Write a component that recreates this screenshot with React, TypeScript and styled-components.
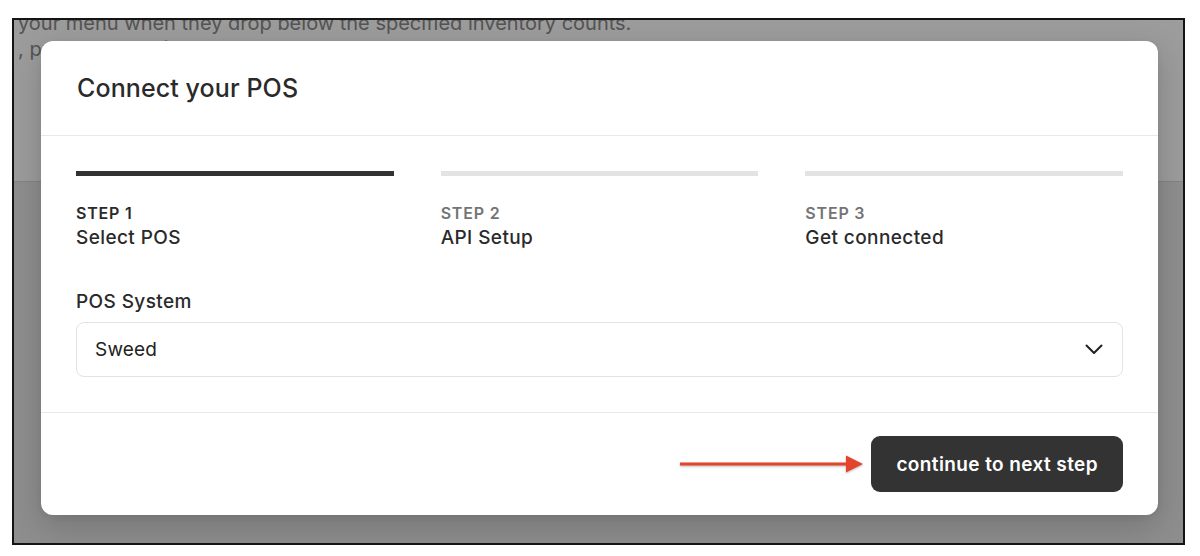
import React from "react";
import styled, { createGlobalStyle } from "styled-components";

const GlobalStyle = createGlobalStyle`
  html, body {
    margin: 0;
    padding: 0;
    background: #ffffff;
    font-family: Inter, "Noto Sans", "Liberation Sans", sans-serif;
    -webkit-font-smoothing: antialiased;
  }
  * { box-sizing: border-box; }
`;

const Stage = styled.div`
  width: 1200px;
  height: 556px;
  padding: 18px 15px 11px 12px;
`;

const Frame = styled.div`
  position: relative;
  width: 1173px;
  height: 527px;
  border: 2px solid #141414;
  overflow: hidden;
  display: flex;
  flex-direction: column;
`;

const PageTop = styled.div`
  height: 162px;
  background: #ffffff;
  border-bottom: 1px solid #d8d8d8;
  padding-left: 4px;
`;

const PageText = styled.p`
  margin: 0;
  font-size: 20px;
  line-height: 26px;
  color: #8a8a8a;
  white-space: nowrap;
  &:first-child {
    margin-top: -10px;
  }
`;

const PageBody = styled.div`
  flex: 1;
  background: #e9e9e9;
`;

const Overlay = styled.div`
  position: absolute;
  inset: 0;
  background: rgba(0, 0, 0, 0.39);
  display: flex;
  align-items: flex-start;
  padding: 21px 25px 0 27px;
`;

const Modal = styled.div`
  width: 1117px;
  background: #ffffff;
  border-radius: 12px;
  box-shadow: 0 12px 34px rgba(0, 0, 0, 0.18), 0 2px 6px rgba(0, 0, 0, 0.06);
  display: flex;
  flex-direction: column;
  color: #2a2a2a;
`;

const Header = styled.div`
  height: 95px;
  border-bottom: 1px solid #e8e8e8;
  padding: 0 35px 0 36px;
  display: flex;
  align-items: center;
`;

const Title = styled.h2`
  margin: 0;
  font-size: 25px;
  font-weight: 500;
  color: #2a2a2a;
  letter-spacing: 0.1px;
`;

const Body = styled.div`
  padding: 35px;
  border-bottom: 1px solid #e8e8e8;
`;

const Steps = styled.div`
  display: grid;
  grid-template-columns: repeat(3, 1fr);
  column-gap: 47px;
`;

const Step = styled.div`
  display: flex;
  flex-direction: column;
`;

const StepBar = styled.div<{ $active?: boolean }>`
  height: 5px;
  background: ${(p) => (p.$active ? "#333333" : "#e3e3e3")};
  margin-bottom: 27px;
`;

const StepLabel = styled.div<{ $active?: boolean }>`
  font-size: 16px;
  line-height: 20px;
  font-weight: 600;
  letter-spacing: 0.8px;
  color: ${(p) => (p.$active ? "#2a2a2a" : "#747474")};
`;

const StepName = styled.div`
  margin-top: 3px;
  font-size: 19px;
  line-height: 24px;
  font-weight: 500;
  letter-spacing: 0.4px;
  color: #2a2a2a;
`;

const Field = styled.div`
  margin-top: 40px;
  display: flex;
  flex-direction: column;
  gap: 8px;
`;

const FieldLabel = styled.label`
  font-size: 19px;
  line-height: 24px;
  font-weight: 500;
  letter-spacing: 0.4px;
  color: #2a2a2a;
`;

const SelectBox = styled.div`
  height: 55px;
  border: 1px solid #e3e3e3;
  border-radius: 8px;
  padding: 0 19px 0 18px;
  display: flex;
  align-items: center;
  justify-content: space-between;
  font-size: 19px;
  letter-spacing: 0.2px;
  color: #222222;
`;

const Footer = styled.div`
  height: 102px;
  padding: 0 35px;
  display: flex;
  align-items: center;
  justify-content: flex-end;
  gap: 7px;
`;

const PrimaryButton = styled.button`
  height: 56px;
  padding: 0 25px;
  border: none;
  border-radius: 9px;
  background: #333333;
  color: #ffffff;
  font-family: inherit;
  font-size: 19px;
  font-weight: 600;
  letter-spacing: 0.4px;
  cursor: pointer;
`;

const Arrow = () => (
  <svg width="184" height="22" viewBox="0 0 184 22" style={{ filter: "drop-shadow(0 1px 1px rgba(0,0,0,0.28))" }}>
    <rect x="0" y="9.5" width="168" height="3" fill="#e5432b" />
    <polygon points="166,2.5 183,11 166,19.5" fill="#e5432b" />
  </svg>
);

const Chevron = () => (
  <svg width="18" height="11" viewBox="0 0 18 11" fill="none">
    <path d="M1.5 1.5 L9 9 L16.5 1.5" stroke="#222" strokeWidth="2" strokeLinecap="round" strokeLinejoin="round" />
  </svg>
);

const steps = [
  { label: "STEP 1", name: "Select POS", active: true },
  { label: "STEP 2", name: "API Setup", active: false },
  { label: "STEP 3", name: "Get connected", active: false },
];

export default function App() {
  return (
    <>
      <GlobalStyle />
      <Stage>
        <Frame>
          <PageTop>
            <PageText>your menu when they drop below the specified inventory counts.</PageText>
            <PageText>, products that fall under their thresholds are hidden automatically.</PageText>
          </PageTop>
          <PageBody />
          <Overlay>
            <Modal>
              <Header>
                <Title>Connect your POS</Title>
              </Header>
              <Body>
                <Steps>
                  {steps.map((s) => (
                    <Step key={s.label}>
                      <StepBar $active={s.active} />
                      <StepLabel $active={s.active}>{s.label}</StepLabel>
                      <StepName>{s.name}</StepName>
                    </Step>
                  ))}
                </Steps>
                <Field>
                  <FieldLabel>POS System</FieldLabel>
                  <SelectBox>
                    <span>Sweed</span>
                    <Chevron />
                  </SelectBox>
                </Field>
              </Body>
              <Footer>
                <Arrow />
                <PrimaryButton>continue to next step</PrimaryButton>
              </Footer>
            </Modal>
          </Overlay>
        </Frame>
      </Stage>
    </>
  );
}
